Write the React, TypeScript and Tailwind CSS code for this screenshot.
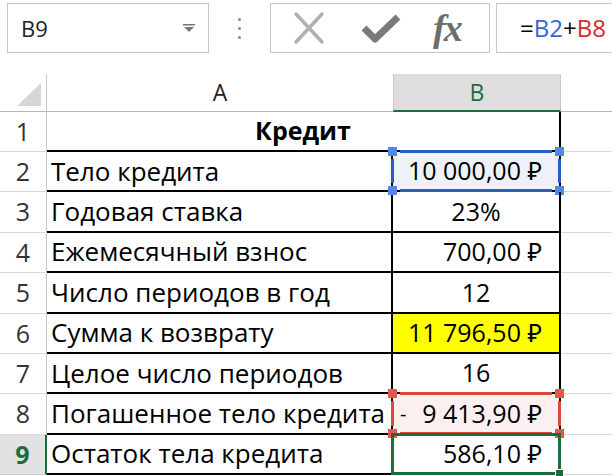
import React from "react";

const font = { fontFamily: '"Open Sans", "Noto Sans", Arial, sans-serif' };

type Row = {
  n: number;
  label: string;
  value: string;
  align: "right" | "center";
  mark?: "blue" | "red" | "green" | "yellow";
  minus?: boolean;
};

const rows: Row[] = [
  { n: 2, label: "Тело кредита", value: "10 000,00 ₽", align: "right", mark: "blue" },
  { n: 3, label: "Годовая ставка", value: "23%", align: "center" },
  { n: 4, label: "Ежемесячный взнос", value: "700,00 ₽", align: "right" },
  { n: 5, label: "Число периодов в год", value: "12", align: "center" },
  { n: 6, label: "Сумма к возврату", value: "11 796,50 ₽", align: "right", mark: "yellow" },
  { n: 7, label: "Целое число периодов", value: "16", align: "center" },
  { n: 8, label: "Погашенное тело кредита", value: "9 413,90 ₽", align: "right", mark: "red", minus: true },
  { n: 9, label: "Остаток тела кредита", value: "586,10 ₽", align: "right", mark: "green" },
];

const Handle = ({ cls }: { cls: string }) => (
  <div className={`absolute w-[9px] h-[9px] ${cls}`} />
);

const Selection = ({ color }: { color: "blue" | "red" }) => {
  const line = color === "blue" ? "bg-[#2b5cc0]" : "bg-[#e0473a]";
  const sq = color === "blue" ? "bg-[#4f8ae8]" : "bg-[#e4574a]";
  return (
    <div className="absolute inset-[-1px] pointer-events-none">
      <div className={`absolute left-[8px] right-[8px] top-[-1px] h-[3px] ${line}`} />
      <div className={`absolute left-[8px] right-[8px] bottom-[-1px] h-[3px] ${line}`} />
      <div className={`absolute top-[8px] bottom-[8px] left-[-1px] w-[3px] ${line}`} />
      <div className={`absolute top-[8px] bottom-[8px] right-[-1px] w-[3px] ${line}`} />
      <Handle cls={`${sq} left-[-4px] top-[-4px]`} />
      <Handle cls={`${sq} right-[-4px] top-[-4px]`} />
      <Handle cls={`${sq} left-[-4px] bottom-[-4px]`} />
      <Handle cls={`${sq} right-[-4px] bottom-[-4px]`} />
    </div>
  );
};

export default function App() {
  return (
    <div className="w-[612px] h-[476px] bg-white overflow-hidden text-black" style={font}>
      {/* Formula bar */}
      <div className="flex items-stretch h-[50px] mt-[3px]">
        <div className="ml-[7px] w-[202px] border border-[#c6c6c6] flex items-center pl-[13px] pr-[12px]">
          <span className="text-[22px] text-[#222]">B9</span>
          <svg className="ml-auto" width="14" height="10" viewBox="0 0 14 10">
            <rect x="1" y="1" width="12" height="1.5" fill="#777" />
            <polygon points="2,4 12,4 7,9" fill="#777" />
          </svg>
        </div>
        <div className="w-[61px] flex flex-col items-center justify-center gap-[6px]">
          <div className="w-[3px] h-[3px] rounded-full bg-[#888]" />
          <div className="w-[3px] h-[3px] rounded-full bg-[#888]" />
          <div className="w-[3px] h-[3px] rounded-full bg-[#888]" />
        </div>
        <div className="w-[220px] border border-[#c6c6c6] flex items-center">
          <svg className="ml-[20px]" width="36" height="34" viewBox="0 0 36 34">
            <path d="M5 3 L31 31 M31 3 L5 31" stroke="#b0b0b0" strokeWidth="3.5" strokeLinecap="round" />
          </svg>
          <svg className="ml-[34px]" width="40" height="32" viewBox="0 0 40 32">
            <path d="M3 16 L14 27 L37 5" stroke="#7a7a7a" strokeWidth="7" fill="none" strokeLinejoin="round" />
          </svg>
          <span
            className="ml-[32px] text-[38px] italic font-bold text-[#6e6e6e] leading-none tracking-[-2px]"
            style={{ fontFamily: '"Liberation Serif", "Times New Roman", serif' }}
          >
            fx
          </span>
        </div>
        <div className="ml-[6px] flex-1 border border-[#c6c6c6] border-r-0 flex items-center pl-[23px] text-[24px] whitespace-nowrap">
          <span>=</span>
          <span className="text-[#3568d4]">B2</span>
          <span>+</span>
          <span className="text-[#d02c2c]">B8</span>
        </div>
      </div>

      {/* Column headers */}
      <div className="mt-[21px] grid grid-cols-[47px_346px_168px_1fr] h-[38px]">
        <div className="border-r border-[#c8c8c8] border-b border-b-[#b5b5b5] relative">
          <svg className="absolute left-[17px] top-[9px]" width="24" height="23" viewBox="0 0 24 23">
            <polygon points="24,0 24,23 0,23" fill="#d6d6d6" />
          </svg>
        </div>
        <div className="border-b border-[#b5b5b5] flex items-center justify-center text-[23px] text-[#222]">A</div>
        <div className="bg-[#dedede] border-x border-[#c8c8c8] border-b-2 border-b-[#1e6b3c] flex items-center justify-center text-[23px] text-[#1e6b3c]">
          B
        </div>
        <div className="border-b border-[#b5b5b5]" />
      </div>

      {/* Row 1 */}
      <div className="grid grid-cols-[47px_346px_168px_1fr] h-[40px]">
        <div className="border-r border-[#c8c8c8] border-b border-b-[#dadada] flex items-center justify-center text-[25px] text-[#333]">
          1
        </div>
        <div className="col-span-2 border-b-2 border-black border-r-2 flex items-center justify-center font-bold text-[25px]">
          Кредит
        </div>
        <div className="border-b border-[#d9d9d9]" />
      </div>

      {rows.map((r) => {
        const active = r.mark === "green";
        return (
          <div key={r.n} className="grid grid-cols-[47px_346px_168px_1fr] h-[40.4px]">
            <div
              className={`flex items-center justify-center text-[25px] border-b ${
                active
                  ? "bg-[#e2e2e2] text-[#1e6b3c] font-bold border-r-2 border-r-[#1e6b3c] border-b-[#cfcfcf]"
                  : "text-[#333] border-r border-r-[#c8c8c8] border-b-[#dadada]"
              }`}
            >
              {r.n}
            </div>
            <div className="border-b-2 border-black border-r-2 flex items-center pl-[4px] text-[26px] whitespace-nowrap overflow-hidden">
              {r.label}
            </div>
            <div
              className={`relative border-b-2 border-black border-r-2 flex items-center text-[25px] whitespace-nowrap ${
                r.align === "center" ? "justify-center" : "justify-end pr-[17px]"
              } ${
                r.mark === "yellow"
                  ? "bg-[#ffff00]"
                  : r.mark === "blue"
                  ? "bg-[#eef1f7]"
                  : r.mark === "red"
                  ? "bg-[#fbefef]"
                  : ""
              }`}
            >
              {r.minus && <span className="absolute left-[7px] text-[20px]">-</span>}
              {r.value}
              {r.mark === "blue" && <Selection color="blue" />}
              {r.mark === "red" && <Selection color="red" />}
              {r.mark === "green" && (
                <div className="absolute inset-[-2px] border-[3px] border-[#1e6b3c] pointer-events-none">
                  <div className="absolute right-[-6px] bottom-[-6px] w-[9px] h-[9px] bg-[#1e6b3c] border border-white" />
                </div>
              )}
            </div>
            <div className="border-b border-[#d9d9d9]" />
          </div>
        );
      })}
    </div>
  );
}
